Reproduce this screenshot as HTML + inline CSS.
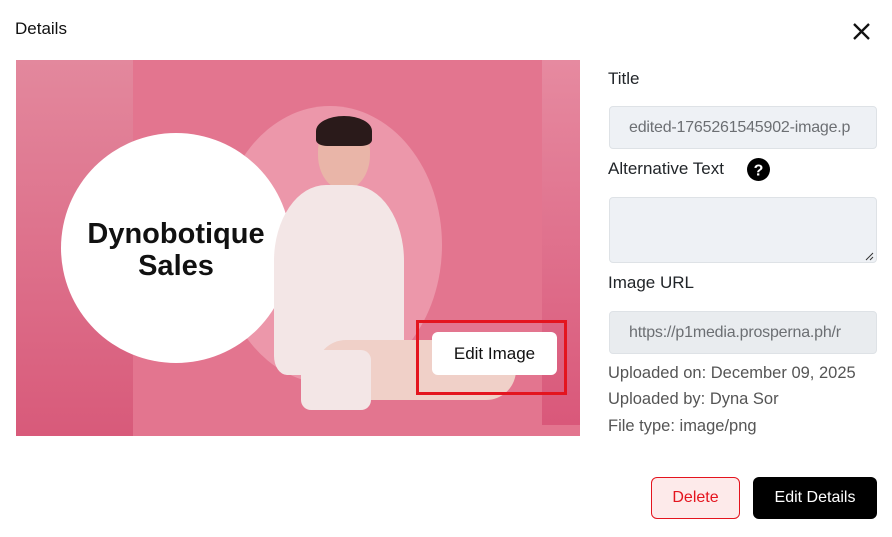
<!DOCTYPE html>
<html><head><style>
body{margin:0;width:892px;height:537px;background:#fff;font-family:"Liberation Sans",Arial,sans-serif;position:relative;overflow:hidden;color:#212529}
.a{position:absolute}
.lbl{font-size:17px;color:#212529}
.inp{position:absolute;left:609px;width:268px;border:1px solid #dee2e6;border-radius:4px;background:#eef1f5;font-size:16px;color:#6c6f73;box-sizing:border-box;padding-left:19px;white-space:nowrap;overflow:hidden;letter-spacing:-0.2px}
.meta{position:absolute;left:608px;font-size:16.5px;color:#555}
</style></head><body>
<div class="a" style="left:15px;top:19px;font-size:17px;font-weight:500;color:#111">Details</div>
<svg class="a" style="left:852px;top:22px" width="19" height="19"><path d="M2 2L17 17M17 2L2 17" stroke="#111" stroke-width="2.3"/></svg>

<div class="a" style="left:16px;top:60px;width:564px;height:376px;background:#e3758f;overflow:hidden">
 <div class="a" style="left:0;top:0;width:117px;height:376px;background:linear-gradient(#e3889d,#d85a7a)"></div>
 <div class="a" style="left:526px;top:0;width:38px;height:365px;background:linear-gradient(#e68aa0,#d9587a)"></div>
 <div class="a" style="left:202px;top:46px;width:224px;height:278px;border-radius:50%;background:#ec97aa"></div>
 <div class="a" style="left:45px;top:73px;width:230px;height:230px;border-radius:50%;background:#fff"></div>
 <div class="a" style="left:45px;top:158px;width:230px;text-align:center;font-weight:bold;font-size:29px;line-height:32px;color:#111">Dynobotique<br>Sales</div>
 <div class="a" style="left:302px;top:60px;width:52px;height:70px;border-radius:45% 45% 50% 50%;background:#e9b5a8"></div>
 <div class="a" style="left:300px;top:56px;width:56px;height:30px;border-radius:50% 50% 20% 20%;background:#2a1a1a"></div>
 <div class="a" style="left:258px;top:125px;width:130px;height:190px;border-radius:40% 40% 10% 10%;background:#f3e6e6"></div>
 <div class="a" style="left:300px;top:280px;width:200px;height:60px;border-radius:30px;background:#f0d0c8"></div>
 <div class="a" style="left:285px;top:290px;width:70px;height:60px;border-radius:10px;background:#f3e6e6"></div>
 <div class="a" style="left:416px;top:272px;width:125px;height:43px;border-radius:6px;background:#fff;line-height:43px;font-size:17px;color:#111;text-align:center">Edit Image</div>
 <div class="a" style="left:400px;top:260px;width:151px;height:75px;border:3px solid #e4141e;box-sizing:border-box"></div>
</div>

<div class="a lbl" style="left:608px;top:69px">Title</div>
<div class="inp" style="top:106px;height:43px;line-height:41px">edited-1765261545902-image.p</div>
<div class="a lbl" style="left:608px;top:159px">Alternative Text</div>
<svg class="a" style="left:747px;top:158px" width="23" height="23"><circle cx="11.5" cy="11.5" r="11.5" fill="#000"/><text x="11.5" y="17.5" text-anchor="middle" font-family="Liberation Sans" font-weight="bold" font-size="16" fill="#fff">?</text></svg>
<div class="inp" style="top:197px;height:66px"></div>
<svg class="a" style="left:865px;top:252px" width="9" height="9"><path d="M1 8L8 1M5 8L8 5" stroke="#333" stroke-width="1"/></svg>
<div class="a lbl" style="left:608px;top:273px">Image URL</div>
<div class="inp" style="top:311px;height:43px;line-height:41px;background:#e9ecef">https://p1media.prosperna.ph/r</div>
<div class="meta" style="top:364px">Uploaded on: December 09, 2025</div>
<div class="meta" style="top:390px">Uploaded by: Dyna Sor</div>
<div class="meta" style="top:417px">File type: image/png</div>

<div class="a" style="left:651px;top:477px;width:89px;height:42px;box-sizing:border-box;border:1px solid #e4141e;border-radius:6px;background:#fdeaea;color:#e4141e;font-size:16px;text-align:center;line-height:40px">Delete</div>
<div class="a" style="left:753px;top:477px;width:124px;height:42px;border-radius:6px;background:#000;color:#fff;font-size:16px;text-align:center;line-height:42px">Edit Details</div>
</body></html>
